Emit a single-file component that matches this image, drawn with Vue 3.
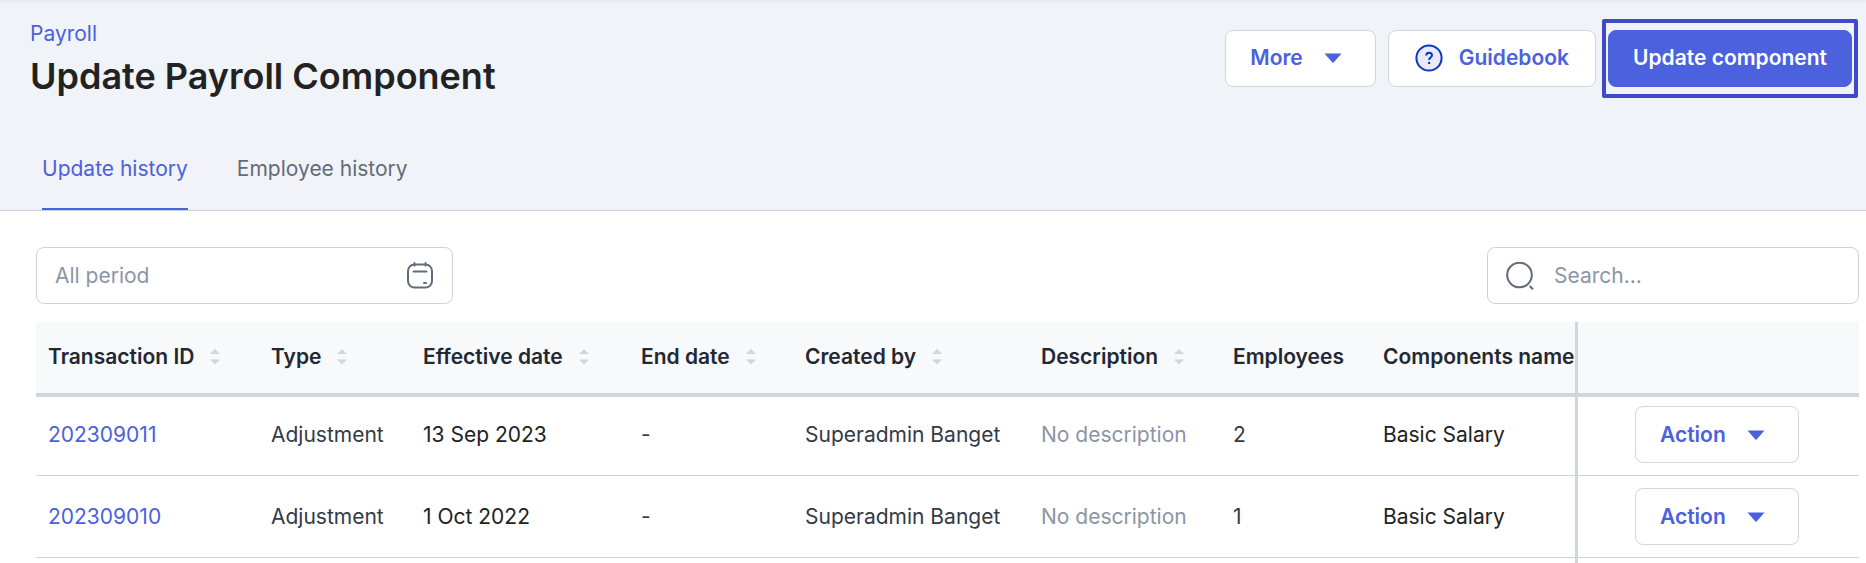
<script setup>
import { ref } from 'vue'

const tabs = ['Update history', 'Employee history']
const activeTab = ref(tabs[0])
const period = ref('')
const query = ref('')

const columns = [
  { key: 'id', label: 'Transaction ID', sortable: true },
  { key: 'type', label: 'Type', sortable: true },
  { key: 'effective', label: 'Effective date', sortable: true },
  { key: 'end', label: 'End date', sortable: true },
  { key: 'creator', label: 'Created by', sortable: true },
  { key: 'description', label: 'Description', sortable: true },
  { key: 'employees', label: 'Employees', sortable: false },
  { key: 'components', label: 'Components name', sortable: false },
]

const rows = [
  { id: '202309011', effective: '13 Sep 2023', employees: 2 },
  { id: '202309010', effective: '1 Oct 2022', employees: 1 },
]
</script>

<template>
  <div class="page">
    <header class="top">
      <div class="heading">
        <div>
          <a class="crumb" href="#">Payroll</a>
          <h1>Update Payroll Component</h1>
        </div>
        <div class="actions">
          <button type="button" class="btn">
            More
            <svg class="caret" viewBox="0 0 18 10" aria-hidden="true"><path d="M0.5 0.5h17L9.6 9.4a.8.8 0 0 1-1.2 0z" /></svg>
          </button>
          <button type="button" class="btn guide">
            <svg class="help" viewBox="0 0 28 28" aria-hidden="true">
              <circle cx="14" cy="14" r="12.6" fill="#e9ebfb" stroke="#0b36bd" stroke-width="2" />
              <path d="M11.2 11.6c0-1.7 1.2-2.9 2.9-2.9s2.9 1.1 2.9 2.6c0 2.2-2.9 2.3-2.9 4.7" fill="none" stroke="#0b36bd" stroke-width="2" />
              <circle cx="14.1" cy="18.9" r="1.2" fill="#0b36bd" />
            </svg>
            Guidebook
          </button>
          <div class="highlight">
            <button type="button" class="btn primary">Update component</button>
          </div>
        </div>
      </div>
      <nav class="tabs">
        <button
          v-for="tab in tabs"
          :key="tab"
          type="button"
          class="tab"
          :class="{ active: tab === activeTab }"
          @click="activeTab = tab"
        >{{ tab }}</button>
      </nav>
    </header>

    <main>
      <div class="filters">
        <label class="field period">
          <input v-model="period" type="text" placeholder="All period" aria-label="Period" />
          <svg class="icon" viewBox="0 0 28 28" fill="none" stroke="#626b79" stroke-width="2" stroke-linecap="round" aria-hidden="true">
            <rect x="2" y="2.5" width="24" height="23" rx="6.5" />
            <path d="M8.5 1v2.5M19.5 1v2.5M7.5 9.5h13M18 21h2" />
          </svg>
        </label>
        <label class="field search">
          <svg class="icon" viewBox="0 0 28 28" fill="none" stroke="#626b79" stroke-width="2" aria-hidden="true">
            <circle cx="13.5" cy="13" r="12.3" />
            <path d="M23.7 24l3.300 3.300" />
          </svg>
          <input v-model="query" type="text" placeholder="Search..." aria-label="Search" />
        </label>
      </div>

      <table>
        <colgroup>
          <col v-for="c in columns" :key="c.key" :class="'col-' + c.key" />
          <col class="col-action" />
        </colgroup>
        <thead>
          <tr>
            <th v-for="c in columns" :key="c.key" scope="col">
              <span class="th">
                {{ c.label }}
                <svg v-if="c.sortable" class="sort" viewBox="0 0 10 16" aria-hidden="true"><path d="M0 5l5-5 5 5zM0 10.5h10l-5 5z" /></svg>
              </span>
            </th>
            <th class="pinned" aria-label="Action"></th>
          </tr>
        </thead>
        <tbody>
          <tr v-for="r in rows" :key="r.id">
            <td><a href="#">{{ r.id }}</a></td>
            <td>Adjustment</td>
            <td class="dark">{{ r.effective }}</td>
            <td>-</td>
            <td>Superadmin Banget</td>
            <td class="muted">No description</td>
            <td>{{ r.employees }}</td>
            <td class="dark">Basic Salary</td>
            <td class="pinned">
              <button type="button" class="btn">
                Action
                <svg class="caret" viewBox="0 0 18 10" aria-hidden="true"><path d="M0.5 0.5h17L9.6 9.4a.8.8 0 0 1-1.2 0z" /></svg>
              </button>
            </td>
          </tr>
        </tbody>
        <tfoot>
          <tr>
            <td :colspan="columns.length"></td>
            <td class="pinned"></td>
          </tr>
        </tfoot>
      </table>
    </main>
  </div>
</template>

<style>
body {
  margin: 0;
  background: #fff;
}
</style>

<style scoped>
.page {
  height: 100vh;
  overflow: hidden;
  font-family: Inter, "Liberation Sans", sans-serif;
  font-size: 21px;
  line-height: 28px;
  color: #343a46;
}
button,
input {
  font: inherit;
}
a {
  color: #4b61dd;
  text-decoration: none;
}
.top {
  background: linear-gradient(#e9edf3, transparent 5px), linear-gradient(#f0f3f8 117px, #f2f3f8 117px);
  border-bottom: 1px solid #cdd3de;
}
.heading {
  display: flex;
  justify-content: space-between;
  padding: 19px 8px 0 30px;
}
.crumb {
  display: block;
  margin-top: 1px;
}
h1 {
  margin: 6px 0 0;
  font-size: 36px;
  line-height: 44px;
  font-weight: 600;
  color: #222;
}
.actions {
  display: flex;
  align-items: center;
  height: 79px;
}
.btn {
  box-sizing: border-box;
  display: inline-flex;
  align-items: center;
  height: 57px;
  padding: 0 24px;
  border: 1px solid #d0d6df;
  border-radius: 8px;
  background: #fff;
  color: #4b61dd;
  font-weight: 600;
  white-space: nowrap;
}
.actions .btn {
  padding-bottom: 2px;
}
.actions .guide {
  margin: 0 6px 0 12px;
  padding: 0 26px 2px;
}
.caret {
  width: 18px;
  height: 10px;
  margin: 0 9px 0 21px;
  fill: #4b61dd;
}
.help {
  width: 28px;
  height: 28px;
  margin-right: 16px;
}
.highlight {
  box-sizing: border-box;
  padding: 7px 2px;
  border: 4px solid #4149cb;
  border-radius: 2px;
}
.primary {
  background: #4b61dd;
  border-color: #4b61dd;
  color: #fff;
}
.tabs {
  display: flex;
  gap: 49px;
  padding: 46px 42px 0;
}
.tab {
  height: 66px;
  padding: 0 0 14px;
  border: 0;
  border-bottom: 2px solid transparent;
  background: none;
  color: #626b79;
}
.tab.active {
  color: #4b61dd;
  border-color: #4b61dd;
}
main {
  padding: 36px 7px 0 36px;
}
.filters {
  display: flex;
  justify-content: space-between;
  margin-bottom: 18px;
}
.field {
  box-sizing: border-box;
  display: flex;
  align-items: center;
  height: 57px;
  padding: 0 18px;
  border: 1px solid #cdd3de;
  border-radius: 8px;
}
.period {
  width: 417px;
}
.search {
  width: 372px;
  gap: 20px;
}
.field input {
  flex: 1;
  min-width: 0;
  padding: 0;
  border: 0;
  outline: 0;
  background: none;
  color: #343a46;
}
.field input::placeholder {
  color: #8b95a7;
  opacity: 1;
}
.icon {
  width: 28px;
  height: 28px;
}
table {
  width: 100%;
  table-layout: fixed;
  border-collapse: separate;
  border-spacing: 0;
}
.col-id { width: 223px; }
.col-type { width: 152px; }
.col-effective { width: 218px; }
.col-end { width: 164px; }
.col-creator { width: 236px; }
.col-description { width: 192px; }
.col-employees { width: 150px; }
.col-action { width: 284px; }
th,
td {
  box-sizing: border-box;
  padding: 0 0 0 12px;
  text-align: left;
  white-space: nowrap;
  overflow: hidden;
}
th {
  height: 75px;
  padding-bottom: 2px;
  background: #f7f9fb;
  border-bottom: 4px solid #d0d6df;
  color: #222832;
  font-weight: 600;
}
.th {
  display: flex;
  align-items: center;
}
.sort {
  flex: none;
  width: 10px;
  height: 16px;
  margin-left: 16px;
  fill: #d0d6df;
}
tbody td {
  height: 82px;
  border-bottom: 1px solid #cdd3de;
}
tbody tr:first-child td {
  height: 79px;
  padding-bottom: 3px;
}
tfoot td {
  height: 24px;
}
.pinned {
  border-left: 3px solid #d0d6df;
}
td.pinned {
  padding-left: 57px;
}
td.pinned .btn {
  vertical-align: middle;
}
.dark {
  color: #222;
}
.muted {
  color: #8b95a7;
}
</style>
